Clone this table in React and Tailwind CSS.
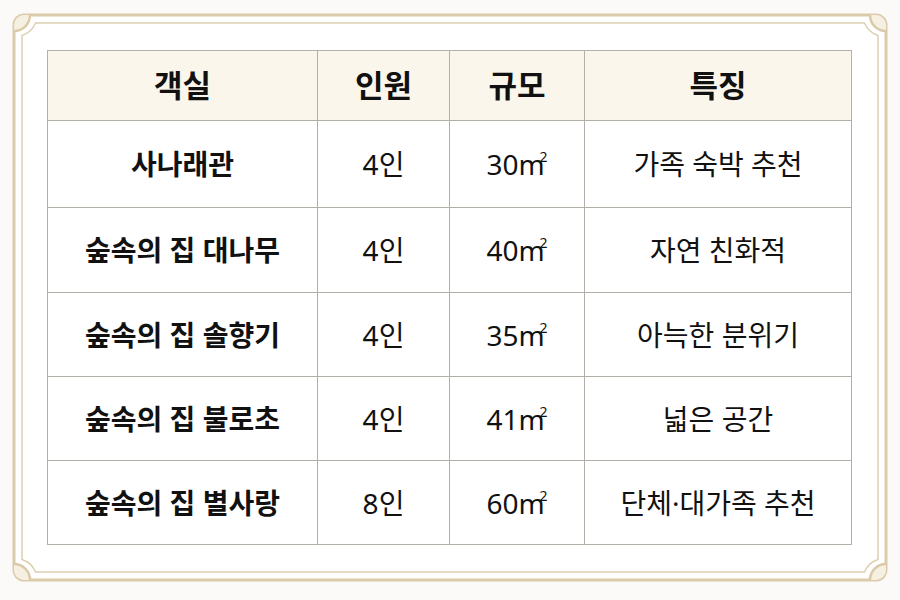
import React from "react";

const rows = [
  ["사나래관", "4인", "30", "가족 숙박 추천"],
  ["숲속의 집 대나무", "4인", "40", "자연 친화적"],
  ["숲속의 집 솔향기", "4인", "35", "아늑한 분위기"],
  ["숲속의 집 불로초", "4인", "41", "넓은 공간"],
  ["숲속의 집 별사랑", "8인", "60", "단체·대가족 추천"],
];
const heights = ["h-[87px]", "h-[85px]", "h-[84px]", "h-[84px]", "h-[84px]"];

function Corner({ t }) {
  return (
    <g transform={t}>
      <path d="M0 16 V10 A10 10 0 0 1 10 0 H16 A16 16 0 0 1 0 16 Z" fill="#f6f0e3" />
      <path d="M0 16 A16 16 0 0 0 16 0" fill="none" stroke="#dacaa7" strokeWidth="2.5" />
    </g>
  );
}

function Frame() {
  return (
    <svg className="absolute inset-0 pointer-events-none" width="900" height="600" viewBox="0 0 900 600">
      <rect x="14" y="15" width="872" height="565" rx="10" fill="none" stroke="#dccbaa" strokeWidth="3" />
      <path
        d="M35.5 23 H864.5 A22 22 0 0 0 878 35.5 V559.5 A22 22 0 0 0 864.5 572 H35.5 A22 22 0 0 0 22 559.5 V35.5 A22 22 0 0 0 35.5 23 Z"
        fill="none"
        stroke="#ddd0b1"
        strokeWidth="1.5"
      />
      <Corner t="translate(14,15)" />
      <Corner t="translate(886,15) scale(-1,1)" />
      <Corner t="translate(886,580) scale(-1,-1)" />
      <Corner t="translate(14,580) scale(1,-1)" />
    </svg>
  );
}

function Area({ n }) {
  return (
    <span>
      {n}m<span className="relative -top-[13px] -ml-[5px] text-[14px]">2</span>
    </span>
  );
}

export default function App() {
  return (
    <div
      className="relative w-[900px] h-[600px] bg-[#fbfaf8] overflow-hidden text-[#111]"
      style={{ fontFamily: '"Noto Sans", "Noto Sans CJK KR", sans-serif' }}
    >
      <div className="absolute left-[14px] top-[15px] w-[872px] h-[565px] rounded-[10px] bg-white" />
      <Frame />
      <div className="relative pt-[50px] pl-[47px]">
        <table className="border-collapse table-fixed w-[804px] border border-[#a9a59e]">
          <colgroup>
            <col className="w-[270px]" />
            <col className="w-[132px]" />
            <col className="w-[135px]" />
            <col className="w-[267px]" />
          </colgroup>
          <thead>
            <tr className="h-[70px] bg-[#fbf6eb]">
              {["객실", "인원", "규모", "특징"].map((h) => (
                <th key={h} className="border border-[#b4b0a9] text-[31px] font-bold text-center align-middle p-0 leading-none">
                  {h}
                </th>
              ))}
            </tr>
          </thead>
          <tbody>
            {rows.map((r, i) => (
              <tr key={i} className={heights[i]}>
                <td className="border border-[#b4b0a9] text-[28px] font-bold text-center align-middle p-0 leading-none">{r[0]}</td>
                <td className="border border-[#b4b0a9] text-[28px] text-center align-middle p-0 leading-none">{r[1]}</td>
                <td className="border border-[#b4b0a9] text-[28px] text-center align-middle p-0 leading-none">
                  <Area n={r[2]} />
                </td>
                <td className="border border-[#b4b0a9] text-[28px] text-center align-middle p-0 leading-none">{r[3]}</td>
              </tr>
            ))}
          </tbody>
        </table>
      </div>
    </div>
  );
}
